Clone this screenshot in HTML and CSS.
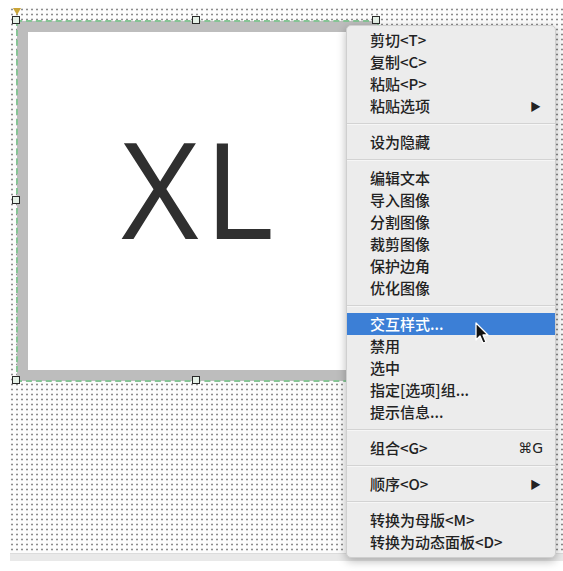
FILE: index.html
```html
<!DOCTYPE html>
<html lang="zh-CN">
<head>
  <meta charset="UTF-8" />
  <title>Context menu</title>
  <link rel="stylesheet" href="styles.css">
</head>
<body>

  <div class="canvas">
    <div class="anchor"></div>

    <div class="widget">
      <div class="widget-inner">
        <span class="label">XL</span>
      </div>
      <span class="handle h-tl"></span>
      <span class="handle h-tm"></span>
      <span class="handle h-tr"></span>
      <span class="handle h-ml"></span>
      <span class="handle h-bl"></span>
      <span class="handle h-bm"></span>
    </div>
  </div>
  <div class="hscroll"></div>

  <ul class="menu">
    <li class="item">剪切&lt;T&gt;</li>
    <li class="item">复制&lt;C&gt;</li>
    <li class="item">粘贴&lt;P&gt;</li>
    <li class="item">粘贴选项<span class="arrow">▶</span></li>
    <li class="sep"></li>
    <li class="item">设为隐藏</li>
    <li class="sep"></li>
    <li class="item">编辑文本</li>
    <li class="item">导入图像</li>
    <li class="item">分割图像</li>
    <li class="item">裁剪图像</li>
    <li class="item">保护边角</li>
    <li class="item">优化图像</li>
    <li class="sep"></li>
    <li class="item active">交互样式...</li>
    <li class="item">禁用</li>
    <li class="item">选中</li>
    <li class="item">指定[选项]组...</li>
    <li class="item">提示信息...</li>
    <li class="sep"></li>
    <li class="item">组合&lt;G&gt;<span class="key">⌘G</span></li>
    <li class="sep"></li>
    <li class="item">顺序&lt;O&gt;<span class="arrow">▶</span></li>
    <li class="sep"></li>
    <li class="item">转换为母版&lt;M&gt;</li>
    <li class="item">转换为动态面板&lt;D&gt;</li>
  </ul>

  <!-- mouse pointer over the highlighted item -->
  <svg class="cursor" width="16" height="24" viewBox="0 0 16 24">
    <path d="M1 1 L1 18 L5 14 L8 21 L11 20 L8 13 L13 13 Z" fill="#111" stroke="#fff" stroke-width="1.3" stroke-linejoin="round"/>
  </svg>

</body>
</html>
```

FILE: styles.css
```css
body {
  margin: 0;
  padding: 8px 0 0 10px;
  background: #fff;
  font-family: "Noto Sans CJK SC", "Liberation Sans", sans-serif;
  position: relative;
  width: 553px;
  height: 563px;
  overflow: hidden;
}

.canvas {
  position: relative;
  height: 545px;
  background-color: #fcfcfc;
  background-image: radial-gradient(circle at 2px 1.5px, #8c8c8c 0.9px, transparent 1.2px);
  background-size: 5px 5px;
}

.hscroll {
  height: 7px;
  background: #e9e9e9;
  border-top: 1px solid #dcdcdc;
}

.anchor {
  position: absolute;
  left: 3px;
  top: 0;
  width: 0;
  height: 0;
  border-left: 4px solid transparent;
  border-right: 4px solid transparent;
  border-top: 7px solid #c9a437;
}

.widget {
  position: absolute;
  left: 7px;
  top: 13px;
  width: 361px;
  height: 360px;
  box-sizing: border-box;
  outline: 2px dashed #86c495;
  outline-offset: -1px;
}

.widget-inner {
  height: 100%;
  box-sizing: border-box;
  border: 11px solid #bdbdbd;
  background: #fff;
  display: flex;
  align-items: center;
  justify-content: center;
}

.label {
  font-family: "Open Sans", "Liberation Sans", sans-serif;
  font-weight: 400;
  font-size: 134px;
  color: #2f2f2f;
  letter-spacing: 5px;
  margin-left: 5px;
  margin-bottom: 28px;
}

.handle {
  position: absolute;
  width: 6px;
  height: 6px;
  border: 1.5px solid #2a2a2a;
  background: #e4f0e6;
}

.h-tl { left: -5px; top: -5px; }
.h-tm { left: 175px; top: -5px; }
.h-tr { left: 355px; top: -5px; }
.h-ml { left: -5px; top: 175px; }
.h-bl { left: -5px; top: 355px; }
.h-bm { left: 175px; top: 355px; }

.menu {
  position: absolute;
  left: 346px;
  top: 25px;
  width: 210px;
  margin: 0;
  padding: 3px 0 4px;
  list-style: none;
  background: #ececec;
  border: 1px solid #cfcfcf;
  border-radius: 5px;
  box-shadow: 0 3px 10px rgba(0, 0, 0, 0.28);
  box-sizing: border-box;
}

.item {
  position: relative;
  height: 22px;
  line-height: 22px;
  padding-left: 23px;
  font-size: 15px;
  font-weight: 500;
  color: #222;
  white-space: nowrap;
}

.item.active {
  background: #3c7fd6;
  color: #fff;
}

.sep {
  height: 0;
  margin: 6px 0;
  border-top: 1px solid #d3d3d3;
  border-bottom: 1px solid #f6f6f6;
}

.arrow {
  position: absolute;
  right: 14px;
  top: 0;
  font-size: 11px;
  color: #222;
}

.key {
  position: absolute;
  right: 12px;
  top: 0;
  font-family: "DejaVu Sans", sans-serif;
  font-size: 14px;
}

.cursor {
  position: absolute;
  left: 475px;
  top: 322px;
}
```
